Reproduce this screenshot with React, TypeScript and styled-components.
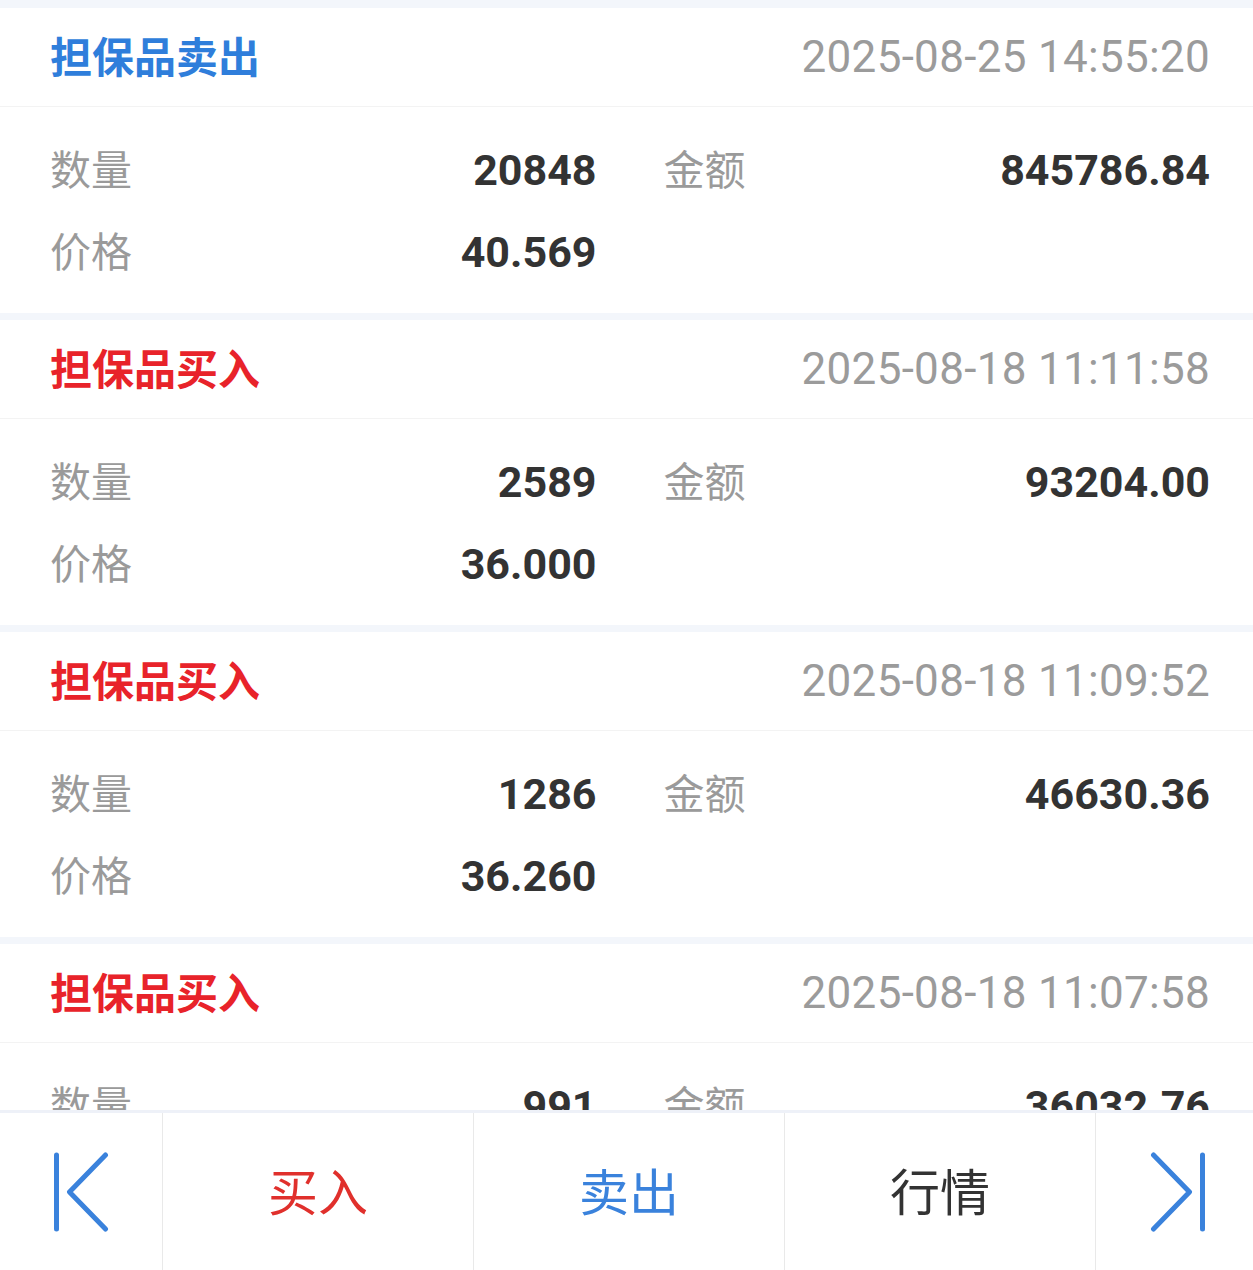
import styled, { createGlobalStyle } from "styled-components";

const GlobalStyle = createGlobalStyle`
  html, body {
    margin: 0;
    padding: 0;
    background: #f3f6fb;
  }
  * {
    box-sizing: border-box;
  }
`;

interface Trade {
    kind: "buy" | "sell";
    time: string;
    qty: string;
    amount: string;
    price: string;
}

const trades: Trade[] = [
    { kind: "sell", time: "2025-08-25 14:55:20", qty: "20848", amount: "845786.84", price: "40.569" },
    { kind: "buy", time: "2025-08-18 11:11:58", qty: "2589", amount: "93204.00", price: "36.000" },
    { kind: "buy", time: "2025-08-18 11:09:52", qty: "1286", amount: "46630.36", price: "36.260" },
    { kind: "buy", time: "2025-08-18 11:07:58", qty: "991", amount: "36032.76", price: "36.360" },
];

const cjk = `"Noto Sans CJK SC", "Noto Sans", sans-serif`;
const num = `Roboto, "Noto Sans CJK SC", sans-serif`;

const Page = styled.div`
  height: 1270px;
  display: flex;
  flex-direction: column;
  overflow: hidden;
  background: #f3f6fb;
`;

const List = styled.div`
  flex: 1;
  min-height: 0;
  overflow: hidden;
  display: flex;
  flex-direction: column;
  gap: 7px;
  padding-top: 8px;
`;

const Card = styled.div`
  flex-shrink: 0;
  background: #ffffff;
`;

const Header = styled.div`
  height: 99px;
  display: flex;
  align-items: center;
  justify-content: space-between;
  padding: 0 43px 0 50px;
  border-bottom: 1px solid #f3f3f3;
`;

const Title = styled.div<{ $kind: "buy" | "sell" }>`
  font-family: ${cjk};
  font-size: 42px;
  font-weight: 700;
  color: ${(p) => (p.$kind === "sell" ? "#2f7edb" : "#e8232a")};
  line-height: 1;
  padding-bottom: 4px;
`;

const Time = styled.div`
  font-family: ${num};
  font-size: 44px;
  color: #9b9b9b;
  line-height: 1;
  letter-spacing: 0.3px;
`;

const Body = styled.div`
  padding: 22px 43px 20px 50px;
  display: grid;
  grid-template-columns: 1fr 1fr;
  column-gap: 67px;
`;

const Field = styled.div`
  height: 82px;
  display: flex;
  align-items: center;
  justify-content: space-between;
`;

const Label = styled.span`
  font-family: ${cjk};
  font-size: 41px;
  line-height: 1;
  padding-bottom: 6px;
  color: #9a9a9a;
`;

const Value = styled.span`
  font-family: ${num};
  font-size: 43px;
  line-height: 1;
  font-weight: 700;
  color: #333333;
`;

const Bar = styled.div`
  flex-shrink: 0;
  height: 160px;
  display: grid;
  grid-template-columns: 163px 1fr 1fr 1fr 157px;
  background: #ffffff;
  border-top: 3px solid #eef1f8;
`;

const Cell = styled.div<{ $last?: boolean }>`
  display: flex;
  align-items: center;
  justify-content: center;
  border-right: ${(p) => (p.$last ? "none" : "1px solid #e9e9e9")};
  padding-left: ${(p) => (p.$last ? "6px" : "0")};
`;

const Action = styled.span<{ $color: string }>`
  font-family: ${cjk};
  font-size: 50px;
  line-height: 1;
  padding-bottom: 6px;
  color: ${(p) => p.$color};
`;

const FirstIcon = () => (
    <svg width="56" height="80" viewBox="0 0 56 80" fill="none" stroke="#3a82dc" strokeWidth="5" strokeLinecap="round" strokeLinejoin="round">
        <line x1="3.5" y1="3" x2="3.5" y2="77" />
        <polyline points="52.5,3 16.5,40 52.5,77" />
    </svg>
);

const LastIcon = () => (
    <svg width="56" height="80" viewBox="0 0 56 80" fill="none" stroke="#3a82dc" strokeWidth="5" strokeLinecap="round" strokeLinejoin="round">
        <line x1="52.5" y1="3" x2="52.5" y2="77" />
        <polyline points="3.5,3 39.5,40 3.5,77" />
    </svg>
);

const TradeCard = ({ t }: { t: Trade }) => (
    <Card>
        <Header>
            <Title $kind={t.kind}>{t.kind === "sell" ? "担保品卖出" : "担保品买入"}</Title>
            <Time>{t.time}</Time>
        </Header>
        <Body>
            <Field>
                <Label>数量</Label>
                <Value>{t.qty}</Value>
            </Field>
            <Field>
                <Label>金额</Label>
                <Value>{t.amount}</Value>
            </Field>
            <Field>
                <Label>价格</Label>
                <Value>{t.price}</Value>
            </Field>
        </Body>
    </Card>
);

const App = () => {
    return (
        <Page>
            <GlobalStyle />
            <List>
                {trades.map((t) => (
                    <TradeCard key={t.time} t={t} />
                ))}
            </List>
            <Bar>
                <Cell><FirstIcon /></Cell>
                <Cell><Action $color="#e0302c">买入</Action></Cell>
                <Cell><Action $color="#3a82dc">卖出</Action></Cell>
                <Cell><Action $color="#333333">行情</Action></Cell>
                <Cell $last><LastIcon /></Cell>
            </Bar>
        </Page>
    );
};

export default App;
